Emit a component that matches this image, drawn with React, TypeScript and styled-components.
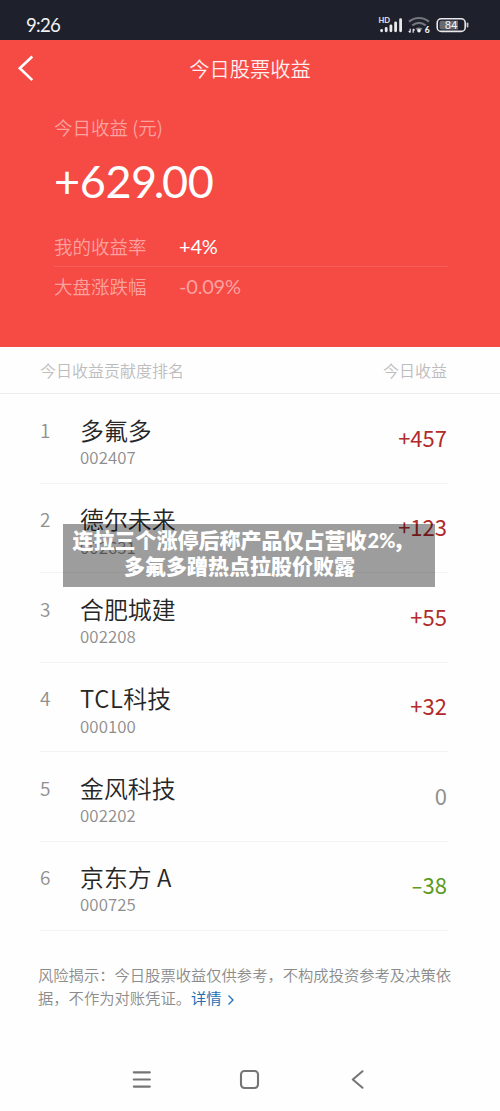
import React from 'react';
import styled, { createGlobalStyle } from 'styled-components';

const GlobalStyle = createGlobalStyle`
  * { box-sizing: border-box; }
  body {
    margin: 0;
    background: #fefefe;
    font-family: "Noto Sans CJK SC", sans-serif;
    font-weight: 350;
  }
`;

const Screen = styled.div`
  width: 500px;
  height: 1111px;
  display: flex;
  flex-direction: column;
  background: #fefefe;
  overflow: hidden;
`;

const StatusBar = styled.div`
  height: 40px;
  flex: none;
  background: #1e212c;
  display: flex;
  justify-content: space-between;
  padding: 0 31px 0 26px;
`;

const Clock = styled.span`
  font: 400 18.6px/26px Lato, sans-serif;
  letter-spacing: -0.75px;
  margin-top: 12px;
  color: #f1f1f3;
`;

const StatusIcons = styled.svg`
  display: block;
  margin-top: 12px;
`;

const Hero = styled.header`
  height: 307px;
  flex: none;
  background: #f64a45;
  color: #fff;
  display: flex;
  flex-direction: column;
`;

const TitleBar = styled.div`
  height: 56px;
  display: grid;
  grid-template-columns: 60px 1fr 60px;
  align-items: center;
`;

const BackIcon = styled.svg`
  margin-left: 16px;
`;

const Title = styled.h1`
  margin: 0;
  padding-bottom: 1px;
  text-align: center;
  font-size: 20.3px;
  font-weight: 350;
  line-height: 28px;
  color: #fff0ef;
`;

const Summary = styled.section`
  padding: 18px 52px 0 54px;
`;

const Label = styled.div`
  font-size: 18.5px;
  line-height: 26px;
  color: #fba29f;
`;

const Total = styled.div`
  font: 400 45px/54px Lato, sans-serif;
  letter-spacing: -0.4px;
  margin: 14px 0 19px;
`;

const Point = styled.span`
  margin: 0 -2px 0 -3px;
`;

const RateRow = styled.div<{ $divided?: boolean }>`
  height: ${p => (p.$divided ? 40 : 39)}px;
  display: flex;
  align-items: center;
  padding-bottom: 1px;
  border-bottom: 1px solid ${p => (p.$divided ? '#f85c58' : 'transparent')};
`;

const RateLabel = styled(Label)`
  width: 125px;
`;

const Rate = styled.span<{ $muted?: boolean }>`
  font: 400 20px/26px Lato, sans-serif;
  letter-spacing: -0.2px;
  color: ${p => (p.$muted ? '#fba29f' : '#fff')};
`;

const TableHead = styled.div`
  height: 47px;
  flex: none;
  padding: 0 53px 1px 40px;
  display: flex;
  justify-content: space-between;
  align-items: center;
  border-bottom: 1px solid #ececec;
  font-size: 16px;
  color: #bdbdbd;
`;

const List = styled.div`
  padding: 0.6px 52px 0 40px;
  flex: none;
`;

const StockRow = styled.div`
  height: 89.4px;
  display: grid;
  grid-template-columns: 40px 1fr auto;
  border-bottom: 1px solid #f3f3f3;
`;

const Rank = styled.span`
  font-size: 19px;
  line-height: 26px;
  padding-top: 22.5px;
  color: #909090;
`;

const StockInfo = styled.div`
  padding-top: 19.4px;
`;

const Name = styled.div`
  font-size: 23.9px;
  line-height: 32px;
  white-space: pre;
  color: #262626;
`;

const Latin = styled.span`
  letter-spacing: 0.6px;
`;

const Code = styled.div`
  font-size: 16.8px;
  letter-spacing: 0.1px;
  line-height: 22px;
  padding-top: 0.5px;
  color: #8d8d8d;
`;

const Gain = styled.span<{ $color: string }>`
  font-size: 22px;
  font-weight: 400;
  line-height: 30px;
  padding: 27.5px 1px 0 0;
  color: ${p => p.$color};
`;

const Minus = styled.span`
  display: inline-block;
  transform: scaleX(1.5);
  transform-origin: right center;
`;

const Notice = styled.p`
  margin: 0;
  padding: 32px 40px 0 38px;
  font-size: 15.3px;
  line-height: 23px;
  color: #8b8b8b;
  white-space: nowrap;
`;

const DetailLink = styled.a`
  color: #2470b5;
  font-weight: 400;
`;

const LinkArrow = styled.svg`
  margin-left: 5px;
  vertical-align: -2px;
`;

const NavBar = styled.nav`
  margin-top: auto;
  height: 64px;
  flex: none;
  display: flex;
  justify-content: center;
  gap: 84px;
`;

const Caption = styled.div`
  position: absolute;
  left: 63px;
  top: 524px;
  width: 372px;
  height: 63px;
  padding: 2px 19px 0 0;
  background: rgba(0, 0, 0, 0.38);
  color: #fff;
  font-size: 21px;
  font-weight: 900;
  line-height: 26px;
  text-align: center;
  white-space: nowrap;
`;

const Percent = styled.span`
  font: 900 20px/20px Lato, sans-serif;
  margin-left: 1px;
`;

const Comma = styled.span`
  margin: 0 -7px 0 -3px;
`;

const RED = '#b22a2a';

const stocks = [
  { name: '多氟多', code: '002407', gain: '+457', color: RED },
  { name: '德尔未来', code: '002631', gain: '+123', color: RED },
  { name: '合肥城建', code: '002208', gain: '+55', color: RED },
  { latin: 'TCL', name: '科技', code: '000100', gain: '+32', color: RED },
  { name: '金风科技', code: '002202', gain: '0', color: '#909090' },
  { name: '京东方 A', code: '000725', gain: '-38', color: '#5c9a20' },
];

function GainValue({ value }: { value: string }) {
  if (!value.startsWith('-')) return <>{value}</>;
  return (
    <>
      <Minus>-</Minus>
      {value.slice(1)}
    </>
  );
}

export default function App() {
  return (
    <Screen>
      <GlobalStyle />
      <StatusBar>
        <Clock>9:26</Clock>
        <StatusIcons width="91" height="24" viewBox="378 12 91 24">
          <text x="378.5" y="23" fontSize="7.5" fontWeight="700" fontFamily="Lato" fill="#e8e8ea">HD</text>
          <g stroke="#e8e8ea" strokeWidth="2.8" strokeLinecap="round">
            <path d="M381.6 30.5v.3M386.2 28.4v2.4M390.9 25.8v5M395.6 22.8v8M400.6 19.6v11.2" />
          </g>
          <g fill="none" stroke="#74767e" strokeWidth="2.2">
            <path d="M409 21.6c6-4.8 14-4.8 20 0M412.3 25.4c4.2-3.3 9.2-3.3 13.4 0" />
          </g>
          <path d="M415.5 28.6c2.2-1.6 4.8-1.6 7 0l-3.5 3.6z" fill="#85878e" />
          <path d="M410.2 28.8v3.8m-1.5-1.4 1.5 1.5M413.2 32.7v-3.8m1.4 1.4-1.4-1.5" stroke="#e8e8ea" strokeWidth="1.2" fill="none" />
          <circle cx="419" cy="30.8" r="1.7" fill="#f1f1f3" />
          <text x="424.8" y="33.3" fontSize="8.5" fontWeight="900" fontFamily="Lato" fill="#f1f1f3">6</text>
          <rect x="437.2" y="18.8" width="28" height="12.6" rx="4" fill="none" stroke="#e8e8ea" strokeWidth="1.6" />
          <path d="M441.5 20.8h16.5v8.6h-16.5a2 2 0 0 1-2-2v-4.6a2 2 0 0 1 2-2z" fill="#686a72" />
          <path d="M467.5 23.5v3" stroke="#c6c6ca" strokeWidth="1.8" strokeLinecap="round" />
          <text x="444.7" y="29.2" fontSize="11.3" fontWeight="400" fontFamily="Roboto" fill="#f1f1f3">84</text>
        </StatusIcons>
      </StatusBar>

      <Hero>
        <TitleBar>
          <BackIcon width="20" height="28" viewBox="0 0 20 28">
            <path d="M16.3 2.5 3.8 14.3l12.5 11.8" fill="none" stroke="#fff" strokeWidth="2.6" />
          </BackIcon>
          <Title>今日股票收益</Title>
        </TitleBar>
        <Summary>
          <Label>今日收益 (元)</Label>
          <Total>
            +629<Point>.</Point>00
          </Total>
          <RateRow $divided>
            <RateLabel>我的收益率</RateLabel>
            <Rate>+4%</Rate>
          </RateRow>
          <RateRow>
            <RateLabel>大盘涨跌幅</RateLabel>
            <Rate $muted>-0.09%</Rate>
          </RateRow>
        </Summary>
      </Hero>

      <TableHead>
        <span>今日收益贡献度排名</span>
        <span>今日收益</span>
      </TableHead>

      <List>
        {stocks.map((s, i) => (
          <StockRow key={s.code}>
            <Rank>{i + 1}</Rank>
            <StockInfo>
              <Name>
                {s.latin && <Latin>{s.latin}</Latin>}
                {s.name}
              </Name>
              <Code>{s.code}</Code>
            </StockInfo>
            <Gain $color={s.color}>
              <GainValue value={s.gain} />
            </Gain>
          </StockRow>
        ))}
      </List>

      <Notice>
        风险揭示：今日股票收益仅供参考，不构成投资参考及决策依
        <br />
        据，不作为对账凭证。
        <DetailLink>
          详情
          <LinkArrow width="8" height="12" viewBox="0 0 8 12">
            <path d="M1.5 1.5 6 6l-4.5 4.5" fill="none" stroke="#2470b5" strokeWidth="1.3" />
          </LinkArrow>
        </DetailLink>
      </Notice>

      <NavBar>
        <svg width="24" height="64" viewBox="130 1047 24 64">
          <path d="M133.8 1072.3h16M133.8 1079.5h16M133.8 1086.6h16" stroke="#757575" strokeWidth="2.2" strokeLinecap="round" />
        </svg>
        <svg width="24" height="64" viewBox="238 1047 24 64">
          <rect x="241" y="1071" width="17" height="17" rx="3.5" fill="none" stroke="#757575" strokeWidth="2.1" />
        </svg>
        <svg width="24" height="64" viewBox="346 1047 24 64">
          <path d="m362.5 1071.3-9.7 8.2 9.7 8.2" fill="none" stroke="#757575" strokeWidth="2.1" strokeLinecap="round" strokeLinejoin="round" />
        </svg>
      </NavBar>

      <Caption>
        连拉三个涨停后称产品仅占营收<Percent>2%</Percent><Comma>，</Comma>
        <br />
        多氟多蹭热点拉股价败露
      </Caption>
    </Screen>
  );
}
